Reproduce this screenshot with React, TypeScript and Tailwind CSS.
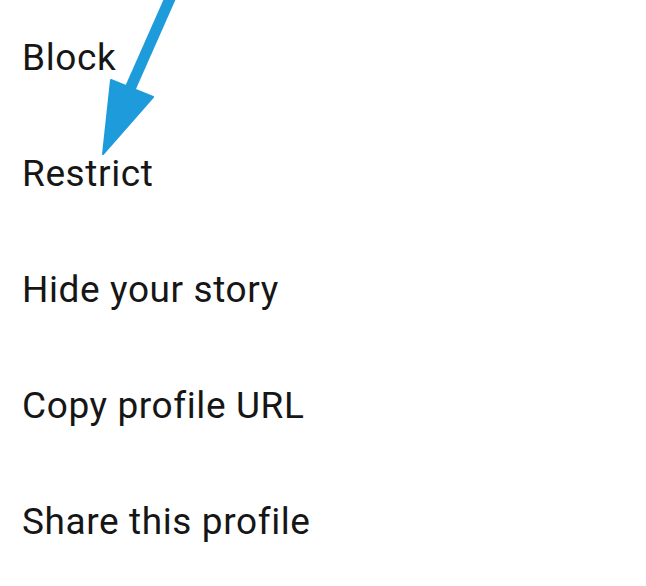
import React from 'react';

const items = ['Block', 'Restrict', 'Hide your story', 'Copy profile URL', 'Share this profile'];

const App: React.FC = () => {
  return (
    <div className="relative w-[646px] h-[586px] overflow-hidden bg-white font-['Roboto',sans-serif]">
      <ul className="flex flex-col pl-[22px]">
        {items.map(label => (
          <li key={label} className="h-[116px] text-[37px] leading-[116px] tracking-[0.6px] text-[#161616]">
            {label}
          </li>
        ))}
      </ul>

      {/* pointer arrow */}
      <svg className="absolute left-0 top-0" width="220" height="170" viewBox="0 0 220 170">
        <line x1="172" y1="-6" x2="126" y2="98" stroke="#1D9BDA" strokeWidth="11" />
        <polygon points="111,80 153,97 103,154" fill="#1D9BDA" stroke="#1D9BDA" strokeWidth="2" strokeLinejoin="round" />
      </svg>
    </div>
  );
};

export default App;
